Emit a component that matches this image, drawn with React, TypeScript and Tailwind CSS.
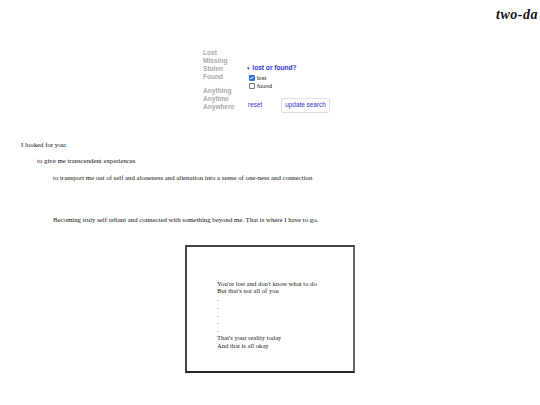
import React from 'react'

// Small scaled-down page: search filter, some lines, a framed poem

function Check({ checked }: { checked: boolean }) {
  return checked ? (
    <span className="inline-flex h-[6px] w-[6px] items-center justify-center rounded-[1px] bg-[#2f6fe4]">
      <svg viewBox="0 0 10 10" className="h-[5.5px] w-[5.5px]">
        <path d="M2 5.2 L4.2 7.4 L8 2.8" fill="none" stroke="#fff" strokeWidth="1.8" />
      </svg>
    </span>
  ) : (
    <span className="inline-block h-[6px] w-[6px] rounded-[1px] border border-[#777] bg-white" />
  )
}

const poem = [
  "You're lost and don't know what to do",
  "But that's not all of you",
  '.',
  '.',
  '.',
  '.',
  '.',
  "That's your reality today",
  'And that is all okay',
]

export default function App() {
  return (
    <div className="h-[405px] w-[540px] overflow-hidden bg-white font-['Liberation_Serif',serif] text-[6.8px] leading-[8px] text-[#111]">
      {/* header, clipped at the right edge */}
      <div className="whitespace-nowrap pl-[496px] pt-[7px] text-[14px] font-bold italic leading-[16px] tracking-[0.5px]">
        two-da
      </div>

      {/* search filter */}
      <div className="mt-[26px] flex pl-[203px] font-['Liberation_Sans',sans-serif] text-[6.6px] leading-[8px]">
        <div className="flex w-[43px] flex-col gap-[6px] font-bold text-[#aaaaaa]">
          <div>
            Lost
            <br />
            Missing
            <br />
            Stolen
            <br />
            Found
          </div>
          <div>
            Anything
            <br />
            Anytime
            <br />
            Anywhere
          </div>
        </div>

        <div className="pt-[15px]">
          <div className="font-bold text-[#3333cc]">
            <span className="text-[4.5px]">▼</span> lost or found?
          </div>
          <div className="pl-[3px] pt-[0.5px] text-[6px] text-[#222]">
            <label className="flex h-[8.5px] items-center gap-[2px]">
              <Check checked />
              lost
            </label>
            <label className="flex h-[8.5px] items-center gap-[2px]">
              <Check checked={false} />
              found
            </label>
          </div>
          <div className="mt-[7px] flex items-center gap-[19px] pl-[2px] text-[6.4px] text-[#3333cc]">
            <span>reset</span>
            <button className="h-[15px] rounded-[2px] border border-[#dddddd] bg-white px-[3px] text-[6.4px] text-[#3333cc]">
              update search
            </button>
          </div>
        </div>
      </div>

      {/* lines */}
      <p className="mt-[28px] pl-[21px]">I looked for you:</p>
      <p className="mt-[8px] pl-[37px]">to give me transcendent experiences</p>
      <p className="mt-[9px] pl-[53px]">
        to transport me out of self and aloneness and alienation into a sense of one-ness and connection
      </p>
      <p className="mt-[34px] pl-[53px]">
        Becoming truly self reliant and connected with something beyond me. That is where I have to go.
      </p>

      {/* framed poem */}
      <div className="mx-auto mt-[21px] h-[128px] w-[170px] border-2 border-[#444] border-r-[#666] border-b-[#222] pl-[30px] pt-[33px] text-[6.6px] leading-[7.75px] text-[#222]">
        {poem.map((line, i) => (
          <div key={i}>{line}</div>
        ))}
      </div>
    </div>
  )
}
